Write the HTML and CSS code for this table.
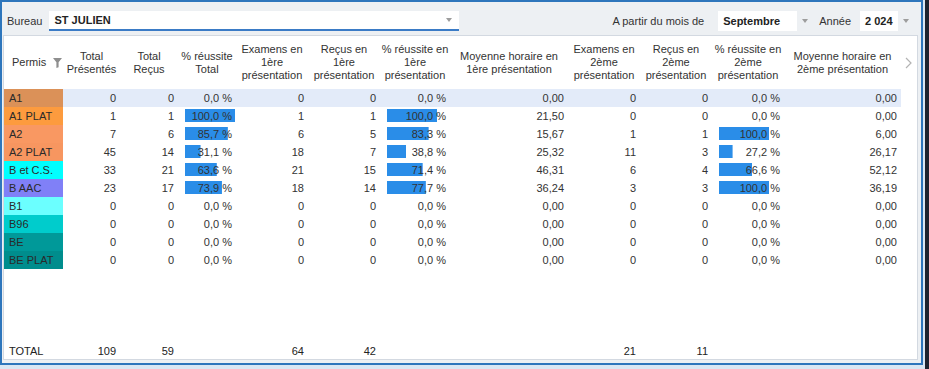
FILE: index.html
```html
<!DOCTYPE html>
<html lang="fr">
<head>
<meta charset="utf-8">
<title>Statistiques permis</title>
<link rel="stylesheet" href="styles.css">
</head>
<body>
<div class="frame">
  <div class="toolbar">
    <span class="lbl">Bureau</span>
    <div class="combo"><span class="val">ST JULIEN</span><span class="caret"></span></div>
    <div class="spacer"></div>
    <span class="lbl">A partir du mois de</span>
    <div class="box month">Septembre</div>
    <div class="arrow"><span class="caret"></span></div>
    <span class="lbl year-lbl">Année</span>
    <div class="box year">2 024</div>
    <div class="arrow"><span class="caret"></span></div>
  </div>
  <div class="panel">
    <div class="grid head">
      <div class="h-permis">Permis<svg class="funnel" width="9" height="10" viewBox="0 0 9 10"><path d="M0 0H9L5.6 4.3V9.2L3.4 10V4.3Z" fill="#8e8e8e"/></svg></div>
      <div>Total<br>Présentés</div>
      <div>Total<br>Reçus</div>
      <div>% réussite<br>Total</div>
      <div>Examens en<br>1ère<br>présentation</div>
      <div>Reçus en<br>1ère<br>présentation</div>
      <div>% réussite en<br>1ère<br>présentation</div>
      <div>Moyenne horaire en<br>1ère présentation</div>
      <div>Examens en<br>2ème<br>présentation</div>
      <div>Reçus en<br>2ème<br>présentation</div>
      <div>% réussite en<br>2ème<br>présentation</div>
      <div>Moyenne horaire en<br>2ème présentation</div>
      <div class="chev"><svg width="7" height="12" viewBox="0 0 7 12"><path d="M1 1L6 6L1 11" fill="none" stroke="#b3b3b3" stroke-width="1.2"/></svg></div>
    </div>

    <div class="grid row sel">
      <div class="permis c-a1">A1</div>
      <div>0</div><div>0</div><div class="pct">0,0 %</div>
      <div>0</div><div>0</div><div class="pct">0,0 %</div>
      <div>0,00</div>
      <div>0</div><div>0</div><div class="pct">0,0 %</div>
      <div>0,00</div><div class="end"></div>
    </div>
    <div class="grid row">
      <div class="permis c-a1p">A1 PLAT</div>
      <div>1</div><div>1</div><div class="pct" style="--p:100">100,0 %</div>
      <div>1</div><div>1</div><div class="pct" style="--p:100">100,0 %</div>
      <div>21,50</div>
      <div>0</div><div>0</div><div class="pct">0,0 %</div>
      <div>0,00</div><div class="end"></div>
    </div>
    <div class="grid row">
      <div class="permis c-a2">A2</div>
      <div>7</div><div>6</div><div class="pct" style="--p:85.7">85,7 %</div>
      <div>6</div><div>5</div><div class="pct" style="--p:83.3">83,3 %</div>
      <div>15,67</div>
      <div>1</div><div>1</div><div class="pct" style="--p:100">100,0 %</div>
      <div>6,00</div><div class="end"></div>
    </div>
    <div class="grid row">
      <div class="permis c-a2p">A2 PLAT</div>
      <div>45</div><div>14</div><div class="pct" style="--p:31.1">31,1 %</div>
      <div>18</div><div>7</div><div class="pct" style="--p:38.8">38,8 %</div>
      <div>25,32</div>
      <div>11</div><div>3</div><div class="pct" style="--p:27.2">27,2 %</div>
      <div>26,17</div><div class="end"></div>
    </div>
    <div class="grid row">
      <div class="permis c-bcs">B et C.S.</div>
      <div>33</div><div>21</div><div class="pct" style="--p:63.6">63,6 %</div>
      <div>21</div><div>15</div><div class="pct" style="--p:71.4">71,4 %</div>
      <div>46,31</div>
      <div>6</div><div>4</div><div class="pct" style="--p:66.6">66,6 %</div>
      <div>52,12</div><div class="end"></div>
    </div>
    <div class="grid row">
      <div class="permis c-baac">B AAC</div>
      <div>23</div><div>17</div><div class="pct" style="--p:73.9">73,9 %</div>
      <div>18</div><div>14</div><div class="pct" style="--p:77.7">77,7 %</div>
      <div>36,24</div>
      <div>3</div><div>3</div><div class="pct" style="--p:100">100,0 %</div>
      <div>36,19</div><div class="end"></div>
    </div>
    <div class="grid row">
      <div class="permis c-b1">B1</div>
      <div>0</div><div>0</div><div class="pct">0,0 %</div>
      <div>0</div><div>0</div><div class="pct">0,0 %</div>
      <div>0,00</div>
      <div>0</div><div>0</div><div class="pct">0,0 %</div>
      <div>0,00</div><div class="end"></div>
    </div>
    <div class="grid row">
      <div class="permis c-b96">B96</div>
      <div>0</div><div>0</div><div class="pct">0,0 %</div>
      <div>0</div><div>0</div><div class="pct">0,0 %</div>
      <div>0,00</div>
      <div>0</div><div>0</div><div class="pct">0,0 %</div>
      <div>0,00</div><div class="end"></div>
    </div>
    <div class="grid row">
      <div class="permis c-be">BE</div>
      <div>0</div><div>0</div><div class="pct">0,0 %</div>
      <div>0</div><div>0</div><div class="pct">0,0 %</div>
      <div>0,00</div>
      <div>0</div><div>0</div><div class="pct">0,0 %</div>
      <div>0,00</div><div class="end"></div>
    </div>
    <div class="grid row">
      <div class="permis c-bep">BE PLAT</div>
      <div>0</div><div>0</div><div class="pct">0,0 %</div>
      <div>0</div><div>0</div><div class="pct">0,0 %</div>
      <div>0,00</div>
      <div>0</div><div>0</div><div class="pct">0,0 %</div>
      <div>0,00</div><div class="end"></div>
    </div>

    <div class="fill"></div>

    <div class="grid row total">
      <div class="permis">TOTAL</div>
      <div>109</div><div>59</div><div></div>
      <div>64</div><div>42</div><div></div>
      <div></div>
      <div>21</div><div>11</div><div></div>
      <div></div><div class="end"></div>
    </div>
  </div>
</div>
<div class="edge"></div>
</body>
</html>
```
FILE: styles.css
```css
* { box-sizing: border-box; }

body {
  margin: 0;
  width: 929px;
  height: 369px;
  overflow: hidden;
  background: #dae7f3;
  display: flex;
  align-items: flex-start;
  font-family: "Liberation Sans", Arial, sans-serif;
  font-size: 11px;
  color: #333;
}

.frame {
  width: 923px;
  height: 365px;
  border: 2px solid #2e76bc;
  background: #edf0f3;
  display: flex;
  flex-direction: column;
}

.edge {
  width: 4px;
  height: 369px;
  margin-left: 2px;
  background: #1d2330;
}

/* toolbar */
.toolbar {
  height: 33px;
  flex: none;
  display: flex;
  align-items: flex-end;
  padding: 0 7px 4px 5px;
}

.lbl {
  color: #333;
  white-space: nowrap;
  line-height: 20px;
}

.combo {
  margin-left: 7px;
  width: 410px;
  height: 20px;
  background: #fff;
  border-bottom: 2px solid #3a7bc6;
  display: flex;
  align-items: center;
  padding: 0 7px 0 5px;
  font-weight: bold;
  color: #222;
}
.combo .val { flex: 1; }

.caret {
  display: block;
  width: 0;
  height: 0;
  border-left: 3.5px solid transparent;
  border-right: 3.5px solid transparent;
  border-top: 4px solid #9d9d9d;
}

.spacer { flex: 1; }

.box {
  height: 20px;
  background: #fff;
  display: flex;
  align-items: center;
  padding-left: 5px;
  font-weight: bold;
  color: #222;
  white-space: nowrap;
}
.box.month { width: 79px; margin-left: 14px; }
.box.year { width: 38px; margin-left: 9px; }

.arrow {
  width: 16px;
  height: 20px;
  display: flex;
  align-items: center;
  justify-content: center;
}

.year-lbl { margin-left: 6px; }

/* panel */
.panel {
  flex: 1;
  margin: 0 3px 3px 1px;
  background: #fff;
  border: 1px solid #d3d9e1;
  display: flex;
  flex-direction: column;
}

.grid {
  display: grid;
  grid-template-columns: 59px 57px 58px 58px 72px 72px 70px 118px 72px 72px 72px 117px 1fr;
}

.head { height: 53px; flex: none; }
.head > div {
  display: flex;
  align-items: center;
  justify-content: center;
  text-align: center;
  line-height: 13px;
  color: #333;
  white-space: nowrap;
}
.head .h-permis {
  justify-content: flex-start;
  padding-left: 8px;
}
.funnel { margin-left: 7px; margin-top: 1px; }
.head .chev { justify-content: center; padding-right: 2px; }

.row { height: 18px; flex: none; }
.row > div {
  height: 18px;
  line-height: 18px;
  text-align: right;
  padding-right: 4px;
  white-space: nowrap;
  color: #333;
}
.row > .permis {
  text-align: left;
  padding-left: 5px;
  color: #2a2a2a;
}

.row.sel > div:not(.permis):not(.end) { background-color: #e3ebf9; }

.pct {
  --p: 0;
  background-image: linear-gradient(#2a8de8, #2a8de8);
  background-repeat: no-repeat;
  background-position: 7px 2px;
  background-size: calc(var(--p) * 0.5px) 13px;
}

.c-a1 { background: #db9158; }
.c-a1p { background: #fd9b3e; }
.c-a2 { background: #f99862; }
.c-a2p { background: #f79660; }
.c-bcs { background: #00ffff; }
.c-baac { background: #8080f7; }
.c-b1 { background: #6bffff; }
.c-b96 { background: #00cccc; }
.c-be { background: #009999; }
.c-bep { background: #008d8d; }

.fill { flex: 1; }

.row.total { height: 16px; }
.row.total > div { height: 16px; line-height: 16px; color: #222; }
```
